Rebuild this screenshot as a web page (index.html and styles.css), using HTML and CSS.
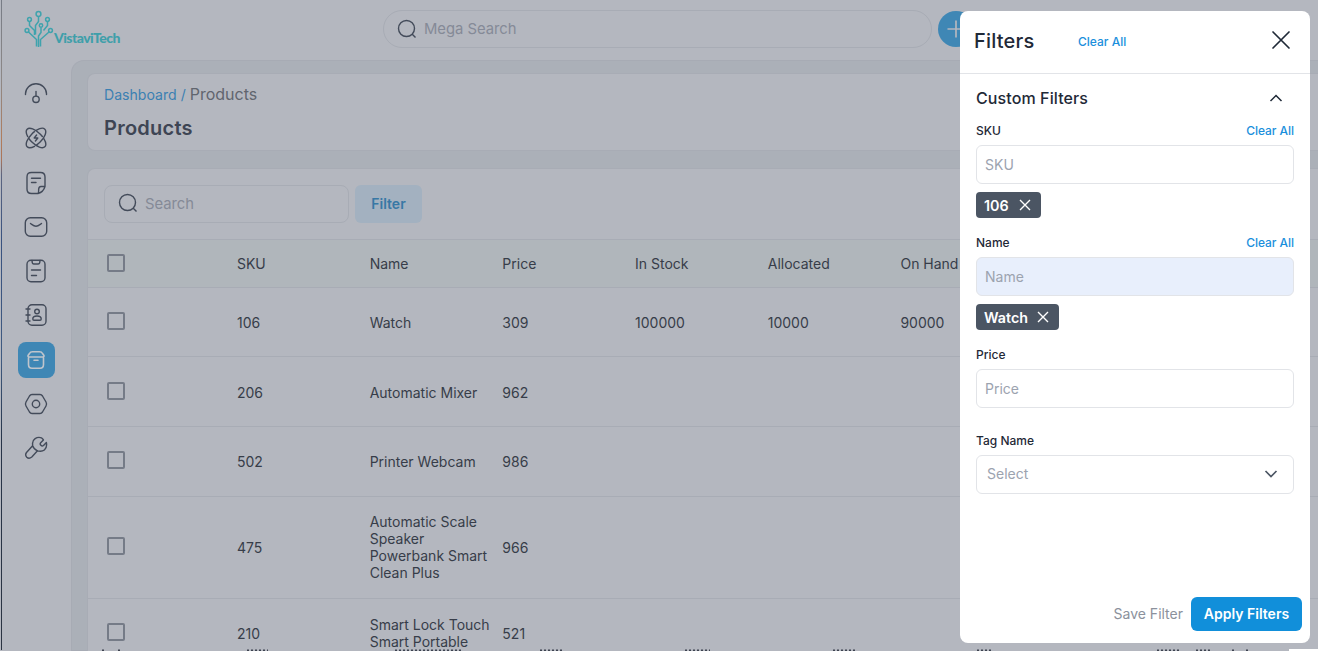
FILE: index.html
```html
<!DOCTYPE html>
<html lang="en">
<head>
<meta charset="utf-8">
<title>Products</title>
<link rel="stylesheet" href="styles.css">
</head>
<body>
<div class="app">
  <div class="edge"></div>
  <header class="topbar">
    <div class="logo">
      <svg width="30" height="38" viewBox="0 0 30 38" fill="none" stroke="#3fa3ad" stroke-width="1.500">
        <circle cx="14.500" cy="4" r="2.400"/><circle cx="5.500" cy="9.500" r="1.900"/><circle cx="23.500" cy="9.500" r="1.900"/><circle cx="3" cy="20.500" r="1.900"/><circle cx="26.500" cy="20.500" r="1.900"/><circle cx="17" cy="15.500" r="1.700"/>
        <path d="M14.500 6.500v5l-3 4v9M5.500 11.500v4l5 5v4.500M23.500 11.500v4l-4 5M17 17.500v5l-2.500 3.500v11M4.500 22l8 7.500v7M25 22l-8.500 7.500v7"/>
      </svg>
      <span>VistaviTech</span>
    </div>
    <div class="mega">
      <svg width="20" height="20" viewBox="0 0 20 20" fill="none" stroke="#434b5a" stroke-width="1.400"><circle cx="9.500" cy="9.500" r="8"/><path d="M15 15l3.500 3.500"/></svg>
      <span>Mega Search</span>
    </div>
    <div class="add"><svg width="36" height="36" viewBox="0 0 36 36" stroke="#b4b7bf" stroke-width="1.700"><path d="M18 9.500v17M9.500 18h17"/></svg></div>
  </header>
  <div class="body">
    <nav class="side">
      <div class="item"><svg viewBox="0 0 24 24"><path d="M1.500 12.500v-.7a10.500 10 0 0 1 21 0v.7"/><circle cx="12" cy="17.300" r="3.200"/><path d="M12 14V9.500"/></svg></div>
      <div class="item"><svg viewBox="0 0 24 24"><ellipse cx="12" cy="12" rx="12.500" ry="5.800" transform="rotate(45 12 12)" stroke-dasharray="19 2.500 26 2.500"/><ellipse cx="12" cy="12" rx="12.500" ry="5.800" transform="rotate(-45 12 12)" stroke-dasharray="19 2.500 26 2.500"/><path d="M12.600 9l-2.400 3h3.600l-2.400 3"/></svg></div>
      <div class="item"><svg viewBox="0 0 24 24"><path d="M14 22.500H7.500c-3.300 0-4.500-1.200-4.500-4.500V6c0-3.300 1.200-4.500 4.500-4.500h9c3.300 0 4.500 1.200 4.500 4.500v9.500c-1 3.500-3.500 6-7 7zM14 22.500c1-1.500.5-3 .7-4.700.2-1.700 1-2.300 2.300-2.300h4M7.500 7.200h9M7.500 11.500H12"/></svg></div>
      <div class="item"><svg viewBox="0 0 24 24"><rect x="1.300" y="2.800" width="21.400" height="18.400" rx="5"/><path d="M6.500 8.500c1.500 1 3.500 2.700 5.500 2.700s4-1.700 5.500-2.700"/></svg></div>
      <div class="item"><svg viewBox="0 0 24 24"><rect x="3" y="1.300" width="18" height="21.400" rx="4"/><path d="M8 1.500c0 2.500.5 3.500 2 3.500h4c1.500 0 2-1 2-3.500M7.500 11h9M7.500 16.500h5"/></svg></div>
      <div class="item"><svg viewBox="0 0 24 24"><rect x="4" y="1.700" width="18" height="20.600" rx="4"/><path d="M2 6h4M2 12h4M2 18h4"/><circle cx="13" cy="8.500" r="2.300"/><path d="M8.800 16c0-4 8.400-4 8.400 0 0 .8-.4 1.200-1.200 1.200h-6c-.8 0-1.200-.4-1.200-1.200z"/></svg></div>
      <div class="item active"><svg viewBox="0 0 24 24"><path d="M4.500 9v7.500c0 3 1 3.700 3.500 3.700h8c2.500 0 3.500-.7 3.500-3.700V9M5.500 5.500C6 4.300 7 3.700 8.500 3.700h7c1.500 0 2.500.6 3 1.800l1.300 1.700c.6 1 0 1.800-1 1.800H5.200c-1 0-1.600-.8-1-1.800zM10 12.300h4"/></svg></div>
      <div class="item"><svg viewBox="0 0 24 24"><path d="M8 2.500h8c1.300 0 1.800.4 2.500 1.500l3.500 6c.8 1.400.8 2.600 0 4l-3.500 6c-.7 1.100-1.200 1.500-2.500 1.500H8c-1.300 0-1.800-.4-2.500-1.500L2 14c-.8-1.400-.8-2.600 0-4l3.500-6C6.200 2.900 6.700 2.500 8 2.500z"/><circle cx="12" cy="12" r="3.700"/></svg></div>
      <div class="item"><svg viewBox="0 0 24 24"><path d="M17.500 1.800c-4.500-1.500-9.500 1.500-8.900 6.500v1.500L2.500 16.500c-1.500 2-.8 3.500.3 4.700 1.200 1.200 3.200 1.300 5-.2l5.700-6.200c5.200 1.500 10.200-1 8.900-8.300L19.500 9.500c-1 .8-1.800.6-2.600-.2s-1-1.700-.2-2.600l2.700-2.800c-.5-1-1-1.700-1.900-2.100zM8.600 9.800c.8 2.300 2.200 4 4.900 5"/></svg></div>
    </nav>
    <main class="main">
      <section class="card heading">
        <div class="crumbs"><a>Dashboard / </a><span>Products</span></div>
        <h1>Products</h1>
      </section>
      <section class="card list">
        <div class="tools">
          <div class="search">
            <svg width="20" height="20" viewBox="0 0 20 20" fill="none" stroke="#434b5a" stroke-width="1.400"><circle cx="9.500" cy="9.500" r="8"/><path d="M15 15l3.500 3.500"/></svg>
            <span>Search</span>
          </div>
          <div class="filter-btn">Filter</div>
        </div>
        <div class="row head"><i class="box"></i><span>SKU</span><span>Name</span><span>Price</span><span>In Stock</span><span>Allocated</span><span>On Hand</span></div>
        <div class="row r1"><i class="box"></i><span>106</span><span>Watch</span><span>309</span><span>100000</span><span>10000</span><span>90000</span></div>
        <div class="row r2 first"><i class="box"></i><span>206</span><span>Automatic Mixer</span><span>962</span></div>
        <div class="row r2"><i class="box up"></i><span>502</span><span>Printer Webcam</span><span>986</span></div>
        <div class="row r4"><i class="box up"></i><span>475</span><span class="multi">Automatic Scale<br>Speaker<br>Powerbank Smart<br>Clean Plus</span><span>966</span></div>
        <div class="row r5"><i class="box up"></i><span>210</span><span class="multi">Smart Lock Touch<br>Smart Portable</span><span>521</span></div>
      </section>
    </main>
  </div>
  <svg class="cutoff" width="1318" height="2" viewBox="0 0 1318 2" stroke="#3d4350" stroke-width="1.500" stroke-dasharray="2 2"><path d="M102 1.250h4M118 1.250h3M247 1.250h21M395 1.250h67M540 1.250h23M685 1.250h25M833 1.250h22M977 1.250h16M1157 1.250h24M1196 1.250h14M1232 1.250h3M1246 1.250h3"/><path d="M1289 1h29" stroke="#fff" stroke-width="2" stroke-dasharray="none"/></svg>
</div>

<aside class="drawer">
  <div class="drawer-head">
    <h2>Filters</h2><a>Clear All</a>
    <svg width="20" height="20" viewBox="0 0 20 20" stroke="#1f2937" stroke-width="1.700" stroke-linecap="round"><path d="M2 2l16 16M18 2L2 18"/></svg>
  </div>
  <div class="drawer-body">
    <div class="group"><h3>Custom Filters</h3><svg width="14" height="10" viewBox="0 0 14 10" fill="none" stroke="#1f2937" stroke-width="1.500"><path d="M1.500 8L7 2.500 12.500 8"/></svg></div>
    <div class="label"><span>SKU</span><a>Clear All</a></div>
    <div class="input">SKU</div>
    <div class="chip sku">106<svg width="12" height="12" viewBox="0 0 12 12" stroke="#fff" stroke-width="1.400"><path d="M1 1l10 10M11 1L1 11"/></svg></div>
    <div class="label next"><span>Name</span><a>Clear All</a></div>
    <div class="input filled">Name</div>
    <div class="chip">Watch<svg width="12" height="12" viewBox="0 0 12 12" stroke="#fff" stroke-width="1.400"><path d="M1 1l10 10M11 1L1 11"/></svg></div>
    <div class="label next"><span>Price</span></div>
    <div class="input">Price</div>
    <div class="label tag"><span>Tag Name</span></div>
    <div class="input select"><span>Select</span><svg width="14" height="10" viewBox="0 0 14 10" fill="none" stroke="#4b5563" stroke-width="1.700"><path d="M1.500 2L7 7.500 12.500 2"/></svg></div>
  </div>
  <div class="actions"><span>Save Filter</span><div class="apply">Apply Filters</div></div>
</aside>
</body>
</html>
```
FILE: styles.css
```css
* { box-sizing: border-box; }
body { margin: 0; font-family: Inter, sans-serif; font-size: 14px; color: #373d49; width: 1318px; height: 651px; overflow: hidden; background: #b4b7bf; }
h1, h2, h3 { margin: 0; font-weight: 600; }
.app { position: relative; width: 1318px; height: 651px; overflow: hidden; background: #b4b7bf; }
.edge { position: absolute; left: 1px; top: 0; width: 1px; height: 650px; background: linear-gradient(#777c86 0, #8d8887 80px, #b07c5c 140px, #a9745a 160px, #5c6580 175px, #39527f 240px, #3f5a80 360px, #273448 440px, #2b3442 650px); }
.topbar { height: 60px; display: flex; padding: 10px 0 0 24px; }
.logo { width: 110px; display: flex; }
.logo span { font: 900 14px/20px Lato, sans-serif; letter-spacing: -.55px; padding-top: 18px; color: #3f9faa; }
.mega { margin-left: 249px; width: 549px; height: 38px; border: 1px solid #a8acb5; border-radius: 19px; display: flex; align-items: center; padding-left: 13px; gap: 7px; color: #858a97; font-size: 14px; letter-spacing: .2px; }
.add { margin: 1px 0 0 6px; width: 36px; height: 36px; border-radius: 18px; background: #3f87b5; }
.body { display: flex; height: 591px; }
.side { width: 71px; padding: 16px 0 0 18px; display: flex; flex-direction: column; gap: 8.3px; }
.item { width: 37px; height: 36px; flex: none; border-radius: 8px; display: flex; align-items: center; justify-content: center; padding-right: 1px; }
.item svg { width: 24px; height: 24px; fill: none; stroke: #434b5a; stroke-width: 1.4; stroke-linecap: round; stroke-linejoin: round; }
.item.active { background: #3f87b5; }
.item.active svg { stroke: #c0c5cc; stroke-width: 1.6; }
.main { flex: 1; background: #abb0b8; border: 1px solid #a7abb4; border-right: 0; border-top-left-radius: 13px; padding: 12px 0 0 15px; display: flex; flex-direction: column; gap: 17px; }
.card { background: #b4b7bf; border: 1px solid #a8acb5; border-radius: 8px 0 0 8px; border-right: 0; flex: none; }
.heading { height: 78px; padding: 9px 0 0 16px; }
.crumbs { height: 22px; line-height: 22px; font-size: 16px; color: #61656e; }
.crumbs a { font-size: 14.1px; color: #3b80b2; }
.heading h1 { font-size: 20px; line-height: 24px; margin-top: 11px; color: #3e4554; letter-spacing: .25px; }
.list { height: 520px; }
.tools { height: 70px; padding: 16px; display: flex; gap: 6px; }
.mega, .search { font-size: 14.8px; letter-spacing: -.02px; }
.mega span { line-height: 18px; }
.search { width: 245px; height: 38px; border: 1px solid #a8acb5; border-radius: 8px; display: flex; align-items: center; gap: 7px; padding: 0 0 0 13px; color: #858a97; }
.search span { line-height: 18px; }
.search svg { margin-bottom: 2px; }
.filter-btn { width: 67px; height: 38px; border-radius: 6px; background: #a3b1c0; color: #3878a5; font-weight: 600; line-height: 38px; text-align: center; }
.row { display: grid; grid-template-columns: repeat(7, 132.700px); padding-left: 16.300px; align-items: center; border-top: 1px solid #a8acb5; line-height: 17px; }
.head { height: 48px; background: #b0b6bb; }
.r1 { height: 69px; }
.r2 { height: 70px; }
.first { padding-top: 1px; }
.r4 { height: 102px; }
.r5 { height: 70px; }
.multi { padding-bottom: 2px; }
.box { width: 18px; height: 18px; border: 2px solid #757b87; border-radius: 2px; margin: 0 0 2px 2.7px; }
.box.up { margin-bottom: 3px; }
.cutoff { position: absolute; left: 0; bottom: 0; }

.drawer { position: absolute; left: 960px; top: 11px; width: 350px; height: 632px; background: #fff; border-radius: 8px; display: flex; flex-direction: column; color: #1f2937; }
.drawer a { color: #1a8fdc; font-size: 12px; font-weight: 500; }
.drawer-head { height: 63px; border-bottom: 1px solid #e2e4e8; padding: 0 19px 2px 14px; display: flex; align-items: center; }
.drawer-head h2 { font-size: 20px; width: 104px; font-weight: 500; letter-spacing: .2px; }
.drawer-head svg { margin: 0 0 3px auto; }
.drawer-body { padding: 12px 16px 0; flex: 1; }
.group { display: flex; justify-content: space-between; align-items: center; height: 24px; padding-right: 11px; }
.group h3 { font-size: 16px; font-weight: 550; letter-spacing: .1px; }
.label { display: flex; justify-content: space-between; align-items: center; height: 16px; margin: 12px 0 7px; font-size: 12px; font-weight: 500; }
.label a { letter-spacing: -.05px; }
.input { height: 39px; border: 1px solid #e2e4e8; border-radius: 6px; padding: 0 8px; line-height: 37px; color: #9ca3af; }
.filled { background: #e8effc; }
.chip { display: flex; width: 83px; align-items: center; justify-content: space-between; height: 26px; margin-top: 8px; padding: 0 10px 0 8px; border-radius: 4px; background: #4b5563; color: #fff; font-weight: 600; font-size: 14.3px; }
.chip.sku { width: 65px; }
.label.next { margin-top: 16px; }
.label.tag { margin-top: 24px; }
.select { display: flex; justify-content: space-between; align-items: center; padding: 0 15px 0 10px; }
.select span { padding-bottom: 2px; }
.select svg { margin-bottom: 2px; }
.actions { display: flex; align-items: center; justify-content: flex-end; gap: 8px; padding: 0 8px 12px 0; color: #8b919c; }
.actions span { padding-bottom: 1px; }
.apply { width: 111px; height: 34px; line-height: 34px; text-align: center; border-radius: 6px; background: #118fda; color: #fff; font-weight: 600; }
```
